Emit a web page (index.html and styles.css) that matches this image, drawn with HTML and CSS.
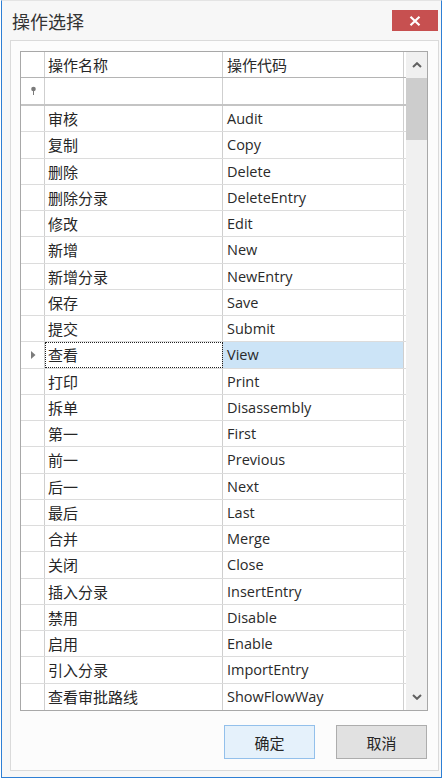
FILE: index.html
```html
<!DOCTYPE html>
<html lang="zh">
<head>
<meta charset="utf-8">
<title>操作选择</title>
<link rel="stylesheet" href="styles.css">
</head>
<body>
<div class="window">
  <div class="titlebar">
    <span class="title">操作选择</span>
    <button class="close" aria-label="关闭">
      <svg width="12" height="10" viewBox="0 0 12 10"><path d="M1.5 0.8 L10.5 9.2 M10.5 0.8 L1.5 9.2" stroke="#fff" stroke-width="2.2" fill="none"/></svg>
    </button>
  </div>
  <div class="panel">
    <div class="grid">
      <div class="table">
        <div class="row header">
          <div class="cell ind"></div>
          <div class="cell name">操作名称</div>
          <div class="cell code">操作代码</div>
        </div>
        <div class="row filter">
          <div class="cell ind">
            <svg width="7" height="10" viewBox="0 0 7 10"><circle cx="3.5" cy="3" r="2.3" fill="#7a7a7a"/><rect x="3" y="4" width="1" height="5" fill="#7a7a7a"/></svg>
          </div>
          <div class="cell name"></div>
          <div class="cell code"></div>
        </div>
        <div class="row"><div class="cell ind"></div><div class="cell name">审核</div><div class="cell code">Audit</div></div>
        <div class="row"><div class="cell ind"></div><div class="cell name">复制</div><div class="cell code">Copy</div></div>
        <div class="row"><div class="cell ind"></div><div class="cell name">删除</div><div class="cell code">Delete</div></div>
        <div class="row"><div class="cell ind"></div><div class="cell name">删除分录</div><div class="cell code">DeleteEntry</div></div>
        <div class="row"><div class="cell ind"></div><div class="cell name">修改</div><div class="cell code">Edit</div></div>
        <div class="row"><div class="cell ind"></div><div class="cell name">新增</div><div class="cell code">New</div></div>
        <div class="row"><div class="cell ind"></div><div class="cell name">新增分录</div><div class="cell code">NewEntry</div></div>
        <div class="row"><div class="cell ind"></div><div class="cell name">保存</div><div class="cell code">Save</div></div>
        <div class="row"><div class="cell ind"></div><div class="cell name">提交</div><div class="cell code">Submit</div></div>
        <div class="row selected">
          <div class="cell ind"><svg width="5" height="8" viewBox="0 0 5 8"><path d="M0 0 L4.5 4 L0 8 Z" fill="#7c7c7c"/></svg></div>
          <div class="cell name focus">查看</div>
          <div class="cell code">View</div>
        </div>
        <div class="row"><div class="cell ind"></div><div class="cell name">打印</div><div class="cell code">Print</div></div>
        <div class="row"><div class="cell ind"></div><div class="cell name">拆单</div><div class="cell code">Disassembly</div></div>
        <div class="row"><div class="cell ind"></div><div class="cell name">第一</div><div class="cell code">First</div></div>
        <div class="row"><div class="cell ind"></div><div class="cell name">前一</div><div class="cell code">Previous</div></div>
        <div class="row"><div class="cell ind"></div><div class="cell name">后一</div><div class="cell code">Next</div></div>
        <div class="row"><div class="cell ind"></div><div class="cell name">最后</div><div class="cell code">Last</div></div>
        <div class="row"><div class="cell ind"></div><div class="cell name">合并</div><div class="cell code">Merge</div></div>
        <div class="row"><div class="cell ind"></div><div class="cell name">关闭</div><div class="cell code">Close</div></div>
        <div class="row"><div class="cell ind"></div><div class="cell name">插入分录</div><div class="cell code">InsertEntry</div></div>
        <div class="row"><div class="cell ind"></div><div class="cell name">禁用</div><div class="cell code">Disable</div></div>
        <div class="row"><div class="cell ind"></div><div class="cell name">启用</div><div class="cell code">Enable</div></div>
        <div class="row"><div class="cell ind"></div><div class="cell name">引入分录</div><div class="cell code">ImportEntry</div></div>
        <div class="row last"><div class="cell ind"></div><div class="cell name">查看审批路线</div><div class="cell code">ShowFlowWay</div></div>
      </div>
      <div class="scrollbar">
        <div class="sb-btn">
          <svg width="10" height="6" viewBox="0 0 10 6"><path d="M1 5 L5 1.2 L9 5" stroke="#606060" stroke-width="2" fill="none"/></svg>
        </div>
        <div class="sb-thumb"></div>
        <div class="sb-track"></div>
        <div class="sb-btn">
          <svg width="10" height="6" viewBox="0 0 10 6"><path d="M1 1 L5 4.8 L9 1" stroke="#606060" stroke-width="2" fill="none"/></svg>
        </div>
      </div>
    </div>
    <div class="buttons">
      <button class="btn primary">确定</button>
      <button class="btn">取消</button>
    </div>
  </div>
</div>
</body>
</html>
```

FILE: styles.css
```css
* { box-sizing: border-box; }

html, body {
  margin: 0;
  padding: 0;
  background: #ffffff;
}

body {
  font-family: "Open Sans", "Noto Sans CJK SC", sans-serif;
  color: #222;
}

.window {
  margin-left: 1px;
  width: 441px;
  height: 778px;
  background: #f7f7f7;
  border: 1px solid #2e7fd4;
  border-top-color: #e4e4e4;
  display: flex;
  flex-direction: column;
}

.titlebar {
  height: 39px;
  display: flex;
  align-items: center;
  justify-content: space-between;
  padding: 0 3px 0 10px;
}

.title {
  font-family: "Noto Sans CJK SC", sans-serif;
  font-size: 18px;
  color: #333;
}

.close {
  width: 46px;
  height: 21px;
  border: none;
  padding: 0;
  background: #c75050;
  display: flex;
  align-items: center;
  justify-content: center;
}

.panel {
  flex: 1;
  margin: 0 2px 6px 8px;
  background: #fcfcfc;
  border: 1px solid #dadada;
  padding: 10px 10px 0 9px;
  display: flex;
  flex-direction: column;
}

.grid {
  height: 660px;
  border: 1px solid #a8a8a8;
  background: #fff;
  display: flex;
}

.table {
  flex: 1;
  display: flex;
  flex-direction: column;
}

.row {
  display: flex;
  height: 26.26px;
  border-bottom: 1px solid #dcdcdc;
  font-size: 15px;
}

.row.last { border-bottom: none; }

.row.header {
  height: 26px;
  border-bottom: 1px solid #b4b4b4;
}

.row.filter {
  height: 28px;
  border-bottom: 2px solid #c4c4c4;
}

.cell {
  display: flex;
  align-items: center;
  border-right: 1px solid #cfcfcf;
  white-space: nowrap;
  overflow: hidden;
}

.cell.ind {
  width: 24px;
  justify-content: center;
  padding-left: 1px;
}

.cell.name {
  width: 178px;
  padding-left: 3px;
  font-family: "Noto Sans CJK SC", sans-serif;
  color: #262626;
}

.cell.code {
  width: 181px;
  padding-left: 4px;
  color: #2a2a2a;
  font-size: 14.5px;
  font-family: "Open Sans", "Noto Sans CJK SC", sans-serif;
}

.header .cell.code {
  font-family: "Noto Sans CJK SC", sans-serif;
  font-size: 15px;
}

.selected .cell.code {
  background: #cce4f7;
}

.cell.focus {
  outline: 1px dotted #222;
  outline-offset: -1px;
}

.scrollbar {
  width: 21px;
  background: #f0f0f0;
  display: flex;
  flex-direction: column;
}

.sb-btn {
  height: 26px;
  display: flex;
  align-items: center;
  justify-content: center;
}

.sb-thumb {
  height: 62px;
  background: #cdcdcd;
}

.sb-track {
  flex: 1;
}

.buttons {
  display: flex;
  justify-content: flex-end;
  gap: 21px;
  margin-top: 14px;
  padding-right: 1px;
}

.btn {
  width: 91px;
  height: 34px;
  font-family: "Noto Sans CJK SC", sans-serif;
  font-size: 15px;
  color: #262626;
  background: #e1e1e1;
  border: 1px solid #adadad;
  padding: 0;
}

.btn.primary {
  background: #e5f1fb;
  border-color: #93c0eb;
}
```
